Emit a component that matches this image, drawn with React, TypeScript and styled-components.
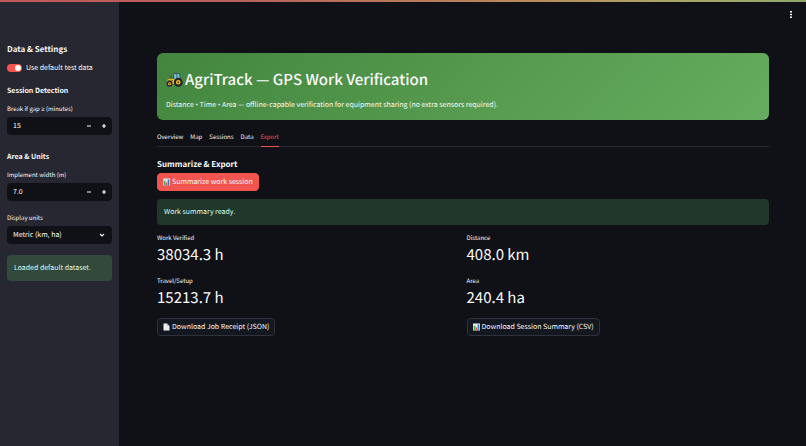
import React, { useState } from "react";
import styled, { createGlobalStyle } from "styled-components";

const GlobalStyle = createGlobalStyle`
  * { box-sizing: border-box; }
  body {
    margin: 0;
    background: #0f1116;
    color: #fafafa;
    font-family: "Source Sans Pro", "Noto Sans CJK SC", "Noto Sans", sans-serif;
    font-size: 7px;
    line-height: 12px;
    text-rendering: geometricPrecision;
  }
  button, input, select { font: inherit; color: inherit; text-rendering: inherit; }
`;

const TopStripe = styled.div`
  position: fixed;
  inset: 0 0 auto 0;
  height: 2px;
  z-index: 2;
  background: linear-gradient(90deg, #c4575a 0%, #b8625a 30%, #b98a5c 65%, #a9a86a 85%, #8fa668 100%);
`;

const Shell = styled.div`
  display: grid;
  grid-template-columns: 119px minmax(0, 1fr);
  min-height: 100vh;
`;

const Sidebar = styled.aside`
  background: #262730;
  padding: 42px 7px 16px;
`;

const SidebarTitle = styled.h2`
  margin: 0 0 5px;
  font-size: 8px;
  line-height: 15px;
  font-weight: 700;
`;

const SidebarHeading = styled.h3<{ $top: number }>`
  margin: ${(p) => p.$top}px 0 6px;
  font-size: 7px;
  line-height: 12px;
  font-weight: 700;
`;

const ToggleLabel = styled.label`
  display: flex;
  align-items: center;
  gap: 4px;
  cursor: pointer;
`;

const Toggle = styled.input`
  appearance: none;
  display: flex;
  align-items: center;
  width: 15px;
  height: 8px;
  margin: 0;
  padding: 1px;
  border-radius: 4px;
  background: #555761;
  &::after {
    content: "";
    width: 6px;
    height: 6px;
    border-radius: 50%;
    background: #fafafa;
  }
  &:checked {
    background: #f2554f;
    justify-content: flex-end;
  }
`;

const Symbol = styled.span`
  font-family: "Open Sans", "Noto Sans", sans-serif;
  line-height: 1;
`;

const FieldLabel = styled.label`
  display: block;
  font-size: 6px;
  line-height: 12px;
  margin-bottom: 2px;
`;

const Field = styled.div<{ $top?: number }>`
  margin-top: ${(p) => p.$top ?? 0}px;
`;

const ControlBox = styled.div`
  display: flex;
  align-items: center;
  height: 18px;
  padding-right: 1px;
  border-radius: 4px;
  background: #0f1116;
  overflow: hidden;
`;

const NumberInput = styled.input`
  flex: 1;
  min-width: 0;
  height: 100%;
  padding: 0 0 0 6px;
  border: 0;
  outline: 0;
  background: transparent;
`;

const StepButton = styled.button`
  display: grid;
  place-items: center;
  width: 15px;
  height: 100%;
  padding: 0;
  border: 0;
  background: transparent;
  cursor: pointer;
`;

const SelectBox = styled.div`
  display: grid;
  grid-template-columns: minmax(0, 1fr) 20px;
  align-items: center;
  justify-items: center;
  height: 18px;
  border-radius: 4px;
  background: #0f1116;
`;

const Select = styled.select`
  appearance: none;
  grid-area: 1 / 1 / 2 / 3;
  width: 100%;
  height: 100%;
  padding: 0 19px 0 6px;
  border: 0;
  border-radius: 4px;
  outline: 0;
  background: transparent;
`;

const Chevron = styled.svg`
  grid-area: 1 / 2;
  pointer-events: none;
`;

const Notice = styled.div<{ $side?: boolean }>`
  padding: 7px;
  border-radius: 4px;
  background: ${(p) => (p.$side ? "#33493c" : "#21372b")};
  color: #dffde9;
  margin-top: ${(p) => (p.$side ? 11 : 8)}px;
`;

const Main = styled.main`
  display: flex;
  flex-direction: column;
  padding: 0 37px 40px 38px;
`;

const Header = styled.header`
  display: flex;
  justify-content: flex-end;
  height: 53px;
  padding-top: 9px;
  margin-right: -27px;
`;

const MenuButton = styled.button`
  display: grid;
  place-items: center;
  width: 10px;
  height: 11px;
  padding: 0;
  border: 0;
  background: transparent;
  cursor: pointer;
`;

const Hero = styled.section`
  padding: 16px 9px 9px;
  border-radius: 6px;
  background: linear-gradient(135deg, #43853e 0%, #66ad5f 100%);
`;

const HeroTitle = styled.h1`
  display: flex;
  align-items: center;
  gap: 2px;
  margin: 0 0 8px;
  font-size: 15px;
  line-height: 22px;
  font-weight: 500;
`;

const HeroText = styled.p`
  margin: 0;
`;

const Tabs = styled.div`
  display: flex;
  gap: 7px;
  margin-top: 8px;
  border-bottom: 1px solid #262730;
`;

const Tab = styled.button<{ $active: boolean }>`
  height: 19px;
  margin-bottom: -1px;
  padding: 0;
  border: 0;
  border-bottom: 1px solid ${(p) => (p.$active ? "#f2554f" : "transparent")};
  background: transparent;
  color: ${(p) => (p.$active ? "#f2554f" : "#fafafa")};
  font-size: 6px;
  cursor: pointer;
`;

const SectionTitle = styled.h3`
  margin: 12px 0 2px;
  font-size: 8px;
  line-height: 12px;
  font-weight: 700;
`;

const ActionButton = styled.button<{ $primary?: boolean }>`
  display: inline-flex;
  align-items: center;
  align-self: flex-start;
  gap: 2px;
  height: 18px;
  padding: 0 5px;
  border: 1px solid ${(p) => (p.$primary ? "#f2554f" : "#30323b")};
  border-radius: 4px;
  background: ${(p) => (p.$primary ? "#f2554f" : "#131720")};
  white-space: nowrap;
  cursor: pointer;
`;

const Columns = styled.div`
  display: grid;
  grid-template-columns: repeat(2, minmax(0, 1fr));
  gap: 7px;
  margin-top: 7px;
`;

const Column = styled.div`
  display: flex;
  flex-direction: column;
`;

const Metric = styled.dl`
  margin: 0 0 9px;
`;

const MetricLabel = styled.dt`
  font-size: 6px;
  line-height: 12px;
`;

const MetricValue = styled.dd`
  margin: 0;
  font-size: 15px;
  line-height: 22px;
`;

function Tractor() {
  return (
    <svg width="17" height="16" viewBox="0 0 34 32" aria-hidden="true">
      <path d="M15 2h12l3 14H14z" fill="#36525c" />
      <path d="M16.500 4h4.500v11h-5zM22.500 4h3.500l2 10h-5.500z" fill="#79bdd0" />
      <path d="M10 7v9" stroke="#3e4238" strokeWidth="2" />
      <path d="M3 15q6-2 12-1l4 1 8-2q5 1 6 6l-4 5H9l-6-3z" fill="#f5b81f" />
      <path d="M4 17h10M5 20h8" stroke="#7b5b17" strokeWidth="1.500" />
      <circle cx="24.500" cy="20.500" r="9" fill="#252725" />
      <circle cx="24.500" cy="20.500" r="4.500" fill="#f7bd25" />
      <circle cx="24.500" cy="20.500" r="2" fill="#5c4927" />
      <circle cx="7" cy="23.500" r="6" fill="#252725" />
      <circle cx="7" cy="23.500" r="3" fill="#f7bd25" />
      <circle cx="7" cy="23.500" r="1.300" fill="#5c4927" />
    </svg>
  );
}

function BarChart() {
  return (
    <svg width="7" height="8" viewBox="0 0 14 16" aria-hidden="true">
      <path d="M0 1h14v14H0z" fill="#e6ebed" />
      <path d="M0 5h14M0 9h14M5 1v14M9.500 1v14" stroke="#b7c3c9" strokeWidth=".6" />
      <path d="M1.500 6h3v9h-3z" fill="#3fa650" />
      <path d="M5.500 9h3v6h-3z" fill="#d8463f" />
      <path d="M9.500 3h3v12h-3z" fill="#2e79bd" />
    </svg>
  );
}

function PageIcon() {
  return (
    <svg width="7" height="8" viewBox="0 0 14 16" aria-hidden="true">
      <path d="M1 1h7l5 5v9H1z" fill="#eceef0" />
      <path d="M8 1v5h5z" fill="#a9adb3" />
    </svg>
  );
}

function StepIcon({ plus }: { plus?: boolean }) {
  return (
    <svg width="6" height="6" viewBox="0 0 6 6" aria-hidden="true">
      <path d={plus ? "M1 3h4M3 1v4" : "M1 3h4"} stroke="#fafafa" strokeWidth="1.200" />
    </svg>
  );
}

function NumberField({ id, name, label, initial, step, digits }: {
  id: string; name: string; label: React.ReactNode; initial: number; step: number; digits: number;
}) {
  const [value, setValue] = useState(initial.toFixed(digits));
  const change = (delta: number) =>
    setValue((v) => Math.max(0, (Number(v) || 0) + delta).toFixed(digits));
  return (
    <Field>
      <FieldLabel htmlFor={id}>{label}</FieldLabel>
      <ControlBox>
        <NumberInput id={id} inputMode="decimal" value={value} onChange={(e) => setValue(e.target.value)} />
        <StepButton type="button" aria-label={`Decrease ${name}`} onClick={() => change(-step)}><StepIcon /></StepButton>
        <StepButton type="button" aria-label={`Increase ${name}`} onClick={() => change(step)}><StepIcon plus /></StepButton>
      </ControlBox>
    </Field>
  );
}

const tabs = ["Overview", "Map", "Sessions", "Data", "Export"];

const columns = [
  {
    metrics: [["Work Verified", "38034.3 h"], ["Travel/Setup", "15213.7 h"]],
    icon: <PageIcon />,
    action: "Download Job Receipt (JSON)",
  },
  {
    metrics: [["Distance", "408.0 km"], ["Area", "240.4 ha"]],
    icon: <BarChart />,
    action: "Download Session Summary (CSV)",
  },
];

export default function App() {
  const [active, setActive] = useState("Export");
  return (
    <>
      <GlobalStyle />
      <TopStripe />
      <Shell>
        <Sidebar>
          <SidebarTitle>Data &amp; Settings</SidebarTitle>
          <ToggleLabel>
            <Toggle type="checkbox" role="switch" defaultChecked />
            Use default test data
          </ToggleLabel>
          <SidebarHeading $top={11}>Session Detection</SidebarHeading>
          <NumberField id="gap" name="gap" label={<>Break if gap <Symbol>≥</Symbol> (minutes)</>} initial={15} step={1} digits={0} />
          <SidebarHeading $top={16}>Area &amp; Units</SidebarHeading>
          <NumberField id="width" name="width" label="Implement width (m)" initial={7} step={0.5} digits={1} />
          <Field $top={11}>
            <FieldLabel htmlFor="units">Display units</FieldLabel>
            <SelectBox>
              <Select id="units">
                <option>Metric (km, ha)</option>
                <option>Imperial (mi, ac)</option>
              </Select>
              <Chevron width="6" height="6" viewBox="0 0 6 6" fill="none" aria-hidden="true">
                <path d="M1 2l2 2 2-2" stroke="#fafafa" strokeWidth="1.100" />
              </Chevron>
            </SelectBox>
          </Field>
          <Notice $side role="status">Loaded default dataset.</Notice>
        </Sidebar>
        <Main>
          <Header>
            <MenuButton type="button" aria-label="Menu">
              <svg width="2" height="7" viewBox="0 0 2 7" aria-hidden="true">
                <path d="M0 0h2v1.500H0zM0 2.750h2v1.500H0zM0 5.500h2V7H0z" fill="#fafafa" />
              </svg>
            </MenuButton>
          </Header>
          <Hero>
            <HeroTitle><Tractor />AgriTrack — GPS Work Verification</HeroTitle>
            <HeroText>
              Distance <Symbol>•</Symbol> Time <Symbol>•</Symbol> Area — offline-capable verification for equipment sharing (no extra sensors required).
            </HeroText>
          </Hero>
          <Tabs role="tablist">
            {tabs.map((t) => (
              <Tab key={t} type="button" role="tab" aria-selected={t === active} $active={t === active} onClick={() => setActive(t)}>{t}</Tab>
            ))}
          </Tabs>
          <SectionTitle>Summarize &amp; Export</SectionTitle>
          <ActionButton type="button" $primary><BarChart />Summarize work session</ActionButton>
          <Notice role="status">Work summary ready.</Notice>
          <Columns>
            {columns.map((c) => (
              <Column key={c.action}>
                {c.metrics.map(([label, value]) => (
                  <Metric key={label}>
                    <MetricLabel>{label}</MetricLabel>
                    <MetricValue>{value}</MetricValue>
                  </Metric>
                ))}
                <ActionButton type="button">{c.icon}{c.action}</ActionButton>
              </Column>
            ))}
          </Columns>
        </Main>
      </Shell>
    </>
  );
}
